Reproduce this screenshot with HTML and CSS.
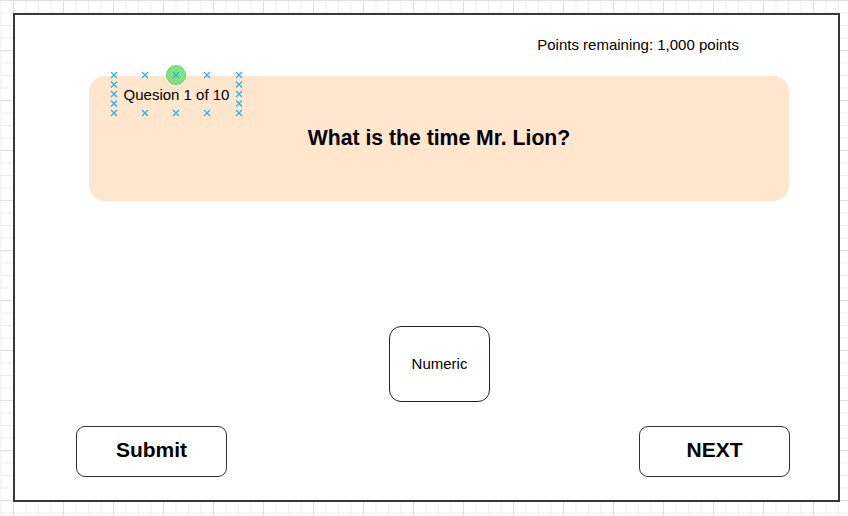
FILE: index.html
```html
<!DOCTYPE html>
<html>
<head>
<meta charset="utf-8">
<link rel="stylesheet" href="styles.css">
</head>
<body>
<div class="frame">
  <div class="points">Points remaining: 1,000 points</div>
  <div class="card">
    <div class="label">
      Quesion 1 of 10
      <svg class="handles" width="137" height="50" viewBox="0 0 137 50" aria-hidden="true">
        <circle cx="68" cy="6" r="9.5" fill="#80e37f" stroke="#66d966" stroke-width="1"/>
        <g stroke="#29b6f2" stroke-width="1.4" stroke-linecap="square">
          <path d="M3.5 3.5l5 5M8.5 3.5l-5 5"/>
          <path d="M34.5 3.5l5 5M39.5 3.5l-5 5"/>
          <path d="M65.5 3.5l5 5M70.5 3.5l-5 5"/>
          <path d="M96.5 3.5l5 5M101.5 3.5l-5 5"/>
          <path d="M128.5 3.5l5 5M133.5 3.5l-5 5"/>
          <path d="M3.5 41.5l5 5M8.5 41.5l-5 5"/>
          <path d="M34.5 41.5l5 5M39.5 41.5l-5 5"/>
          <path d="M65.5 41.5l5 5M70.5 41.5l-5 5"/>
          <path d="M96.5 41.5l5 5M101.5 41.5l-5 5"/>
          <path d="M128.5 41.5l5 5M133.5 41.5l-5 5"/>
          <path d="M3.5 13l5 5M8.5 13l-5 5"/>
          <path d="M3.5 22.5l5 5M8.5 22.5l-5 5"/>
          <path d="M3.5 32l5 5M8.5 32l-5 5"/>
          <path d="M128.5 13l5 5M133.5 13l-5 5"/>
          <path d="M128.5 22.5l5 5M133.5 22.5l-5 5"/>
          <path d="M128.5 32l5 5M133.5 32l-5 5"/>
        </g>
      </svg>
    </div>
    <div class="title">What is the time Mr. Lion?</div>
  </div>
  <div class="numeric">Numeric</div>
  <div class="buttons">
    <div class="btn">Submit</div>
    <div class="btn">NEXT</div>
  </div>
</div>
</body>
</html>
```

FILE: styles.css
```css
html, body {
  margin: 0;
  padding: 0;
}
body {
  width: 848px;
  height: 516px;
  overflow: hidden;
  font-family: "Liberation Sans", Arial, Helvetica, sans-serif;
  color: #000;
  background-color: #fff;
  background-image:
    linear-gradient(to right, #dedede 1px, transparent 1px),
    linear-gradient(to bottom, #dedede 1px, transparent 1px),
    linear-gradient(to right, #efefef 1px, transparent 1px),
    linear-gradient(to bottom, #efefef 1px, transparent 1px);
  background-size: 50px 50px, 50px 50px, 12.5px 12.5px, 12.5px 12.5px;
  background-position: 13px 0, 0 0, 13px 0, 0 0;
}
.frame {
  box-sizing: border-box;
  margin: 13px 0 0 13px;
  width: 827px;
  height: 489px;
  border: 2px solid #383838;
  background: #fff;
  display: flex;
  flex-direction: column;
  align-items: flex-start;
}
.points {
  align-self: stretch;
  margin-top: 21px;
  padding-right: 99px;
  text-align: right;
  font-size: 15px;
  line-height: 17px;
}
.card {
  margin-top: 23px;
  margin-left: 74px;
  width: 700px;
  height: 125px;
  border-radius: 16px;
  background: #ffe6cc;
  display: flex;
  flex-direction: column;
  align-items: flex-start;
}
.label {
  position: relative;
  margin-top: -1px;
  margin-left: 25px;
  width: 125px;
  height: 38px;
  line-height: 40px;
  text-align: center;
  font-size: 15px;
}
.handles {
  position: absolute;
  left: -6px;
  top: -6px;
  overflow: visible;
}
.title {
  align-self: stretch;
  margin-top: 13px;
  text-align: center;
  font-size: 21.2px;
  line-height: 24px;
  font-weight: bold;
}
.numeric {
  box-sizing: border-box;
  margin-top: 125px;
  margin-left: 374px;
  width: 101px;
  height: 76px;
  padding-bottom: 2px;
  border: 1px solid #222;
  border-radius: 12px;
  display: flex;
  align-items: center;
  justify-content: center;
  font-size: 15px;
}
.buttons {
  margin-top: 24px;
  margin-left: 61px;
  width: 714px;
  display: flex;
  justify-content: space-between;
}
.btn {
  box-sizing: border-box;
  width: 151px;
  height: 51px;
  padding-bottom: 4px;
  border: 1px solid #333;
  border-radius: 9px;
  display: flex;
  align-items: center;
  justify-content: center;
  font-size: 21px;
  font-weight: bold;
}
```
